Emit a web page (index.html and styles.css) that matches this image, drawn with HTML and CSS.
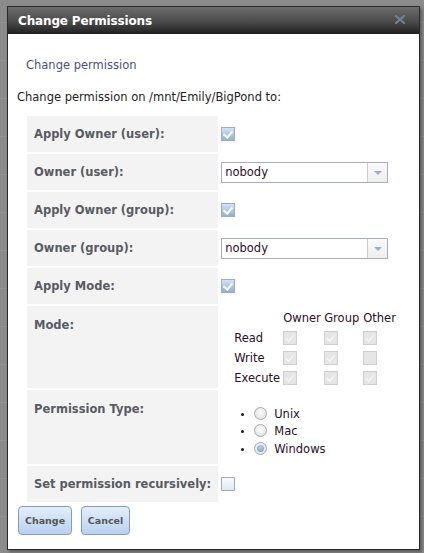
FILE: index.html
```html
<!DOCTYPE html>
<html>
<head>
<meta charset="utf-8">
<title>Change Permissions</title>
<link rel="stylesheet" href="styles.css">
</head>
<body>
<div class="backdrop">
  <div class="dialog">
    <div class="titlebar">
      <span class="title">Change Permissions</span>
      <span class="close">
        <svg width="10" height="9" viewBox="0 0 10 9"><path d="M1 1 L9 8 M9 1 L1 8" stroke="#6f8399" stroke-width="2.2" stroke-linecap="square"/></svg>
      </span>
    </div>
    <div class="content">
      <h2 class="heading">Change permission</h2>
      <p class="intro">Change permission on /mnt/Emily/BigPond to:</p>
      <table class="form">
        <tr>
          <th>Apply Owner (user):</th>
          <td><span class="cb on"></span></td>
        </tr>
        <tr>
          <th>Owner (user):</th>
          <td><div class="select"><span class="value">nobody</span><span class="arrow"></span></div></td>
        </tr>
        <tr>
          <th>Apply Owner (group):</th>
          <td><span class="cb on"></span></td>
        </tr>
        <tr>
          <th>Owner (group):</th>
          <td><div class="select"><span class="value">nobody</span><span class="arrow"></span></div></td>
        </tr>
        <tr>
          <th>Apply Mode:</th>
          <td><span class="cb on"></span></td>
        </tr>
        <tr class="mode-row">
          <th class="top">Mode:</th>
          <td>
            <div class="mode">
              <span></span><span class="col">Owner</span><span class="col">Group</span><span class="col">Other</span>
              <span class="rl">Read</span><span class="cb dis on"></span><span class="cb dis on"></span><span class="cb dis on"></span>
              <span class="rl">Write</span><span class="cb dis on"></span><span class="cb dis on"></span><span class="cb dis"></span>
              <span class="rl">Execute</span><span class="cb dis on"></span><span class="cb dis on"></span><span class="cb dis on"></span>
            </div>
          </td>
        </tr>
        <tr class="type-row">
          <th class="top">Permission Type:</th>
          <td class="radios">
            <ul>
              <li><span class="rb"></span>Unix</li>
              <li><span class="rb"></span>Mac</li>
              <li><span class="rb sel"></span>Windows</li>
            </ul>
          </td>
        </tr>
        <tr>
          <th>Set permission recursively:</th>
          <td><span class="cb"></span></td>
        </tr>
      </table>
      <div class="buttons">
        <button class="btn change">Change</button>
        <button class="btn cancel">Cancel</button>
      </div>
    </div>
  </div>
</div>
</body>
</html>
```
FILE: styles.css
```css
html, body {
  margin: 0;
  padding: 0;
}

body {
  width: 424px;
  height: 553px;
  overflow: hidden;
  background: #8b8b8b;
  font-family: "DejaVu Sans", Verdana, sans-serif;
}

.backdrop {
  height: 553px;
  padding: 6px 0 0 7px;
  box-sizing: border-box;
  background:
    repeating-linear-gradient(to bottom, transparent 0 22px, #949494 22px 23px, transparent 23px 38px),
    #8b8b8b;
}

.dialog {
  width: 413px;
  height: 544px;
  box-sizing: border-box;
  border: 1px solid #2a2a2a;
  background: #fff;
  box-shadow: 2px 2px 3px rgba(0, 0, 0, 0.35);
  display: flex;
  flex-direction: column;
}

.titlebar {
  height: 27px;
  flex: none;
  display: flex;
  align-items: center;
  justify-content: space-between;
  padding: 0 14px 0 10px;
  background: linear-gradient(to bottom, #6c6c6c 0%, #4a4a4a 55%, #2c2c2c 88%, #1f1f1f 100%);
}

.title {
  color: #fff;
  font-weight: bold;
  font-size: 12px;
  letter-spacing: -0.15px;
}

.close {
  display: flex;
  margin-top: -2px;
}

.content {
  padding: 0 0 0 9px;
  color: #222;
  font-size: 11.5px;
}

.heading {
  margin: 24px 0 0 9px;
  font-size: 11.5px;
  font-weight: normal;
  color: #4a5080;
  line-height: 14px;
}

.intro {
  margin: 18px 0 0 0;
  line-height: 14px;
}

.form {
  border-collapse: separate;
  border-spacing: 2px;
  margin: 10px 0 0 8px;
}

.form th {
  width: 177px;
  height: 36px;
  padding: 0 7px;
  box-sizing: content-box;
  text-align: left;
  background: #f3f3f3;
  color: #585b62;
  font-size: 11.5px;
  font-weight: bold;
  vertical-align: middle;
  white-space: nowrap;
}

.form th.top {
  vertical-align: top;
  padding-top: 12px;
}

.mode-row th {
  height: 70px;
}

.type-row th {
  height: 62px;
}

.form td {
  padding: 0 0 0 1px;
  vertical-align: middle;
}

/* checkboxes */
.cb {
  display: inline-block;
  width: 12px;
  height: 12px;
  border: 1px solid #a2a9b9;
  background: linear-gradient(to bottom, #f8fbff, #e2e9f2);
  vertical-align: middle;
  position: relative;
}

.cb.on {
  background: linear-gradient(to bottom, #d2e2f4, #8eb0da);
}

.cb.on::after {
  content: "";
  position: absolute;
  left: 3px;
  top: 1px;
  width: 4px;
  height: 7px;
  border: solid #fff;
  border-width: 0 2px 2px 0;
  transform: rotate(40deg);
}

.cb.dis {
  border-color: #cfcfcf;
  background: #e6e6e6;
}

.cb.dis.on::after {
  border-color: #fbfbfb;
  border-width: 0 1.5px 1.5px 0;
}

/* select */
.select {
  width: 165px;
  height: 19px;
  border: 1px solid #a8aec0;
  display: flex;
  background: #fff;
}

.select .value {
  flex: 1;
  line-height: 19px;
  padding-left: 3px;
  color: #2a0f2a;
}

.select .arrow {
  width: 19px;
  border-left: 1px solid #c8ccd6;
  background: linear-gradient(to bottom, #fafafa, #eeeeee);
  position: relative;
}

.select .arrow::after {
  content: "";
  position: absolute;
  left: 6px;
  top: 8px;
  border-left: 4px solid transparent;
  border-right: 4px solid transparent;
  border-top: 4px solid #9aaecb;
}

/* mode grid */
.mode {
  display: grid;
  grid-template-columns: 49px 41px 39px auto;
  grid-auto-rows: 20px;
  align-items: center;
  margin-left: 13px;
  padding-top: 1px;
  color: #2a0f2a;
}

/* radio list */
.radios ul {
  margin: 0;
  padding: 10px 0 0 33px;
  list-style: disc;
}

.radios li {
  height: 17.5px;
  line-height: 17.5px;
  color: #2a0f2a;
}

.radios li::marker {
  font-size: 10px;
}

.rb {
  display: inline-block;
  width: 11px;
  height: 11px;
  border: 1px solid #a9a9a9;
  border-radius: 50%;
  background: radial-gradient(circle at 50% 40%, #fcfcfc, #dcdcdc);
  vertical-align: -2px;
  margin-right: 7px;
  position: relative;
}

.rb.sel::after {
  content: "";
  position: absolute;
  left: 2px;
  top: 2px;
  width: 7px;
  height: 7px;
  border-radius: 50%;
  background: radial-gradient(circle at 50% 35%, #b9d0ea, #6c93c2);
}

/* buttons */
.buttons {
  display: flex;
  gap: 9px;
  margin: 2px 0 0 1px;
}

.btn {
  height: 29px;
  padding: 0;
  border: 1px solid #7f9dc0;
  border-radius: 4px;
  background: linear-gradient(to bottom, #e4eefa, #b9d1f0);
  color: #555;
  font-family: "DejaVu Sans", Verdana, sans-serif;
  font-size: 9.5px;
  font-weight: bold;
}

.btn.change {
  width: 54px;
}

.btn.cancel {
  width: 49px;
}
```
